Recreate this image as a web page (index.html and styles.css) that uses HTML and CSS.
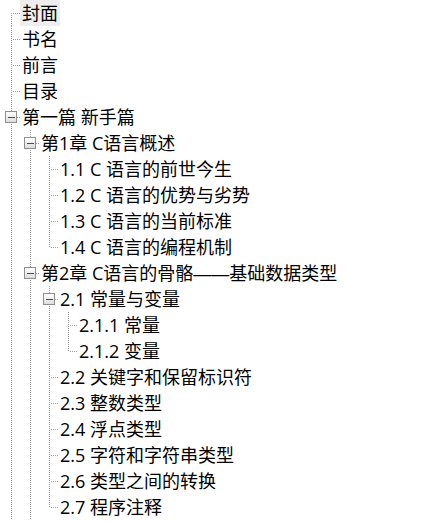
FILE: index.html
```html
<!DOCTYPE html>
<html lang="zh-CN">
<head>
<meta charset="utf-8">
<title>目录</title>
<link rel="stylesheet" href="styles.css">
</head>
<body>
<div class="tree">
  <div class="row"><span class="g first"></span><span class="label sel">封面</span></div>
  <div class="row"><span class="g tee"></span><span class="label">书名</span></div>
  <div class="row"><span class="g tee"></span><span class="label">前言</span></div>
  <div class="row"><span class="g tee"></span><span class="label">目录</span></div>
  <div class="row"><span class="g tee box"><span class="btn"></span></span><span class="label">第一篇 新手篇</span></div>
  <div class="row"><span class="g pipe"></span><span class="g tee box"><span class="btn"></span></span><span class="label">第1章 C语言概述</span></div>
  <div class="row"><span class="g pipe"></span><span class="g pipe"></span><span class="g tee"></span><span class="label">1.1 C 语言的前世今生</span></div>
  <div class="row"><span class="g pipe"></span><span class="g pipe"></span><span class="g tee"></span><span class="label">1.2 C 语言的优势与劣势</span></div>
  <div class="row"><span class="g pipe"></span><span class="g pipe"></span><span class="g tee"></span><span class="label">1.3 C 语言的当前标准</span></div>
  <div class="row"><span class="g pipe"></span><span class="g pipe"></span><span class="g elbow"></span><span class="label">1.4 C 语言的编程机制</span></div>
  <div class="row"><span class="g pipe"></span><span class="g tee box"><span class="btn"></span></span><span class="label">第2章 C语言的骨骼<span class="dash">——</span>基础数据类型</span></div>
  <div class="row"><span class="g pipe"></span><span class="g pipe"></span><span class="g tee box"><span class="btn"></span></span><span class="label">2.1 常量与变量</span></div>
  <div class="row"><span class="g pipe"></span><span class="g pipe"></span><span class="g pipe"></span><span class="g tee"></span><span class="label">2.1.1 常量</span></div>
  <div class="row"><span class="g pipe"></span><span class="g pipe"></span><span class="g pipe"></span><span class="g elbow"></span><span class="label">2.1.2 变量</span></div>
  <div class="row"><span class="g pipe"></span><span class="g pipe"></span><span class="g tee"></span><span class="label">2.2 关键字和保留标识符</span></div>
  <div class="row"><span class="g pipe"></span><span class="g pipe"></span><span class="g tee"></span><span class="label">2.3 整数类型</span></div>
  <div class="row"><span class="g pipe"></span><span class="g pipe"></span><span class="g tee"></span><span class="label">2.4 浮点类型</span></div>
  <div class="row"><span class="g pipe"></span><span class="g pipe"></span><span class="g tee"></span><span class="label">2.5 字符和字符串类型</span></div>
  <div class="row"><span class="g pipe"></span><span class="g pipe"></span><span class="g tee"></span><span class="label">2.6 类型之间的转换</span></div>
  <div class="row"><span class="g pipe"></span><span class="g pipe"></span><span class="g elbow"></span><span class="label">2.7 程序注释</span></div>
</div>
</body>
</html>
```

FILE: styles.css
```css
html, body {
  margin: 0;
  background: #ffffff;
}
body {
  font-family: "Open Sans", "Noto Sans CJK SC", sans-serif;
  font-size: 18px;
  color: #000000;
}
.tree {
  padding-left: 1px;
}
.row {
  display: flex;
  height: 26px;
  align-items: stretch;
}
.g {
  flex: none;
  width: 19px;
  height: 26px;
  background-repeat: no-repeat;
}
.pipe {
  background-image: repeating-linear-gradient(to bottom, #a0a0a0 0 1px, transparent 1px 2px);
  background-size: 1px 26px;
  background-position: 10px 0;
}
.tee {
  background-image:
    repeating-linear-gradient(to bottom, #a0a0a0 0 1px, transparent 1px 2px),
    repeating-linear-gradient(to right, #a0a0a0 0 1px, transparent 1px 2px);
  background-size: 1px 26px, 8px 1px;
  background-position: 10px 0, 12px 13px;
}
.elbow {
  background-image:
    repeating-linear-gradient(to bottom, #a0a0a0 0 1px, transparent 1px 2px),
    repeating-linear-gradient(to right, #a0a0a0 0 1px, transparent 1px 2px);
  background-size: 1px 14px, 8px 1px;
  background-position: 10px 0, 12px 13px;
}
.first {
  background-image:
    repeating-linear-gradient(to bottom, #a0a0a0 0 1px, transparent 1px 2px),
    repeating-linear-gradient(to right, #a0a0a0 0 1px, transparent 1px 2px);
  background-size: 1px 13px, 8px 1px;
  background-position: 10px 13px, 12px 13px;
}
.box {
  display: flex;
  align-items: flex-start;
  padding-left: 4px;
  padding-top: 7px;
  box-sizing: border-box;
}
.btn {
  width: 12px;
  height: 12px;
  box-sizing: border-box;
  border: 1px solid #8e8f8f;
  background:
    linear-gradient(#2c4f93, #2c4f93) 2px 5px / 7px 1px no-repeat,
    linear-gradient(to bottom, #ffffff, #dcdcdc);
}
.label {
  line-height: 26px;
  padding: 0 2px;
  white-space: nowrap;
}
.dash {
  font-family: "Liberation Sans", sans-serif;
}
.sel {
  background: #eeeeee;
}
```
